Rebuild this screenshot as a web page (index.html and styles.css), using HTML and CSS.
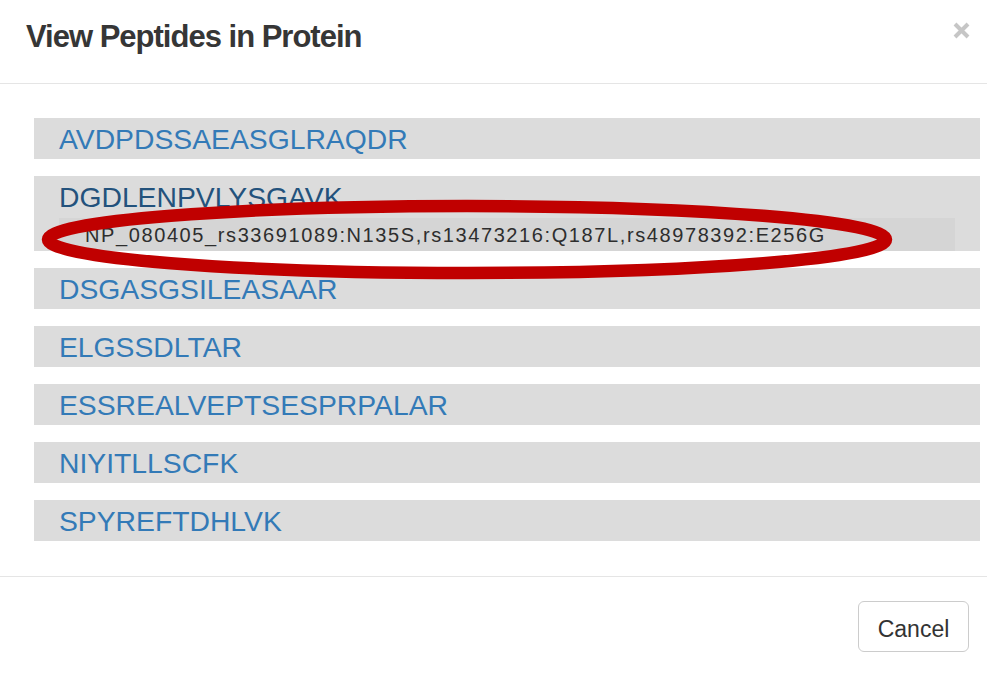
FILE: index.html
```html
<!DOCTYPE html>
<html lang="en">
<head>
<meta charset="utf-8">
<title>View Peptides in Protein</title>
<link rel="stylesheet" href="styles.css">
</head>
<body>
<div class="modal">
  <div class="modal-header">
    <h4 class="modal-title">View Peptides in Protein</h4>
    <button class="close" type="button" aria-label="Close">
      <svg width="17" height="17" viewBox="0 0 17 17"><path d="M2 2 L15 15 M15 2 L2 15" stroke="#c6c6c6" stroke-width="4" fill="none"/></svg>
    </button>
  </div>
  <div class="modal-body">
    <ul class="peptides">
      <li class="peptide"><a class="pep-link" href="#">AVDPDSSAEASGLRAQDR</a></li>
      <li class="peptide">
        <a class="pep-link active" href="#">DGDLENPVLYSGAVK</a>
        <div class="variant">NP_080405_rs33691089:N135S,rs13473216:Q187L,rs48978392:E256G</div>
      </li>
      <li class="peptide"><a class="pep-link" href="#">DSGASGSILEASAAR</a></li>
      <li class="peptide"><a class="pep-link" href="#">ELGSSDLTAR</a></li>
      <li class="peptide"><a class="pep-link" href="#">ESSREALVEPTSESPRPALAR</a></li>
      <li class="peptide"><a class="pep-link" href="#">NIYITLLSCFK</a></li>
      <li class="peptide"><a class="pep-link" href="#">SPYREFTDHLVK</a></li>
    </ul>
  </div>
  <div class="modal-footer">
    <button class="btn" type="button">Cancel</button>
  </div>
  <svg class="annotation" width="862" height="93" viewBox="0 0 862 93">
    <ellipse cx="431" cy="46.5" rx="419" ry="33.5" fill="none" stroke="#c00000" stroke-width="12.5"/>
  </svg>
</div>
</body>
</html>
```

FILE: styles.css
```css
* {
  box-sizing: border-box;
}

html, body {
  margin: 0;
  padding: 0;
  background: #ffffff;
}

body {
  font-family: "Liberation Sans", Arial, Helvetica, sans-serif;
  color: #333333;
}

.modal {
  position: relative;
  width: 987px;
  min-height: 677px;
  background: #ffffff;
}

.modal-header {
  display: flex;
  justify-content: space-between;
  align-items: flex-start;
  padding: 20px 17px 29px 26px;
  border-bottom: 1px solid #e5e5e5;
}

.modal-title {
  margin: 0;
  font-size: 31px;
  line-height: 34px;
  font-weight: 700;
  letter-spacing: -1px;
  color: #363636;
}

.close {
  margin: 2px 0 0 0;
  padding: 0;
  border: 0;
  background: transparent;
  width: 17px;
  height: 17px;
  display: block;
}

.close svg {
  display: block;
}

.modal-body {
  padding: 34px 7px 35px 34px;
}

.peptides {
  list-style: none;
  margin: 0;
  padding: 0;
  display: flex;
  flex-direction: column;
  gap: 17px;
}

.peptide {
  background: #dcdcdc;
}

.pep-link {
  display: block;
  padding: 1px 0 0 25px;
  font-size: 28.3px;
  line-height: 40px;
  height: 41px;
  color: #337ab7;
  text-decoration: none;
}

.pep-link.active {
  color: #23527c;
}

.variant {
  margin: 1px 25px 0 25px;
  height: 33px;
  padding: 3px 0 0 26px;
  background: #d5d5d5;
  font-size: 20px;
  line-height: 28px;
  letter-spacing: 1.6px;
  color: #2e2e2e;
  white-space: nowrap;
}

.modal-footer {
  display: flex;
  justify-content: flex-end;
  padding: 24px 18px 20px 18px;
  border-top: 1px solid #e5e5e5;
}

.btn {
  width: 111px;
  height: 51px;
  background: #ffffff;
  border: 1px solid #cccccc;
  border-radius: 6px;
  font-family: "Liberation Sans", Arial, Helvetica, sans-serif;
  font-size: 23px;
  color: #333333;
  padding: 6px 0 0 0;
}

.annotation {
  position: absolute;
  left: 36px;
  top: 193px;
  pointer-events: none;
}
```
